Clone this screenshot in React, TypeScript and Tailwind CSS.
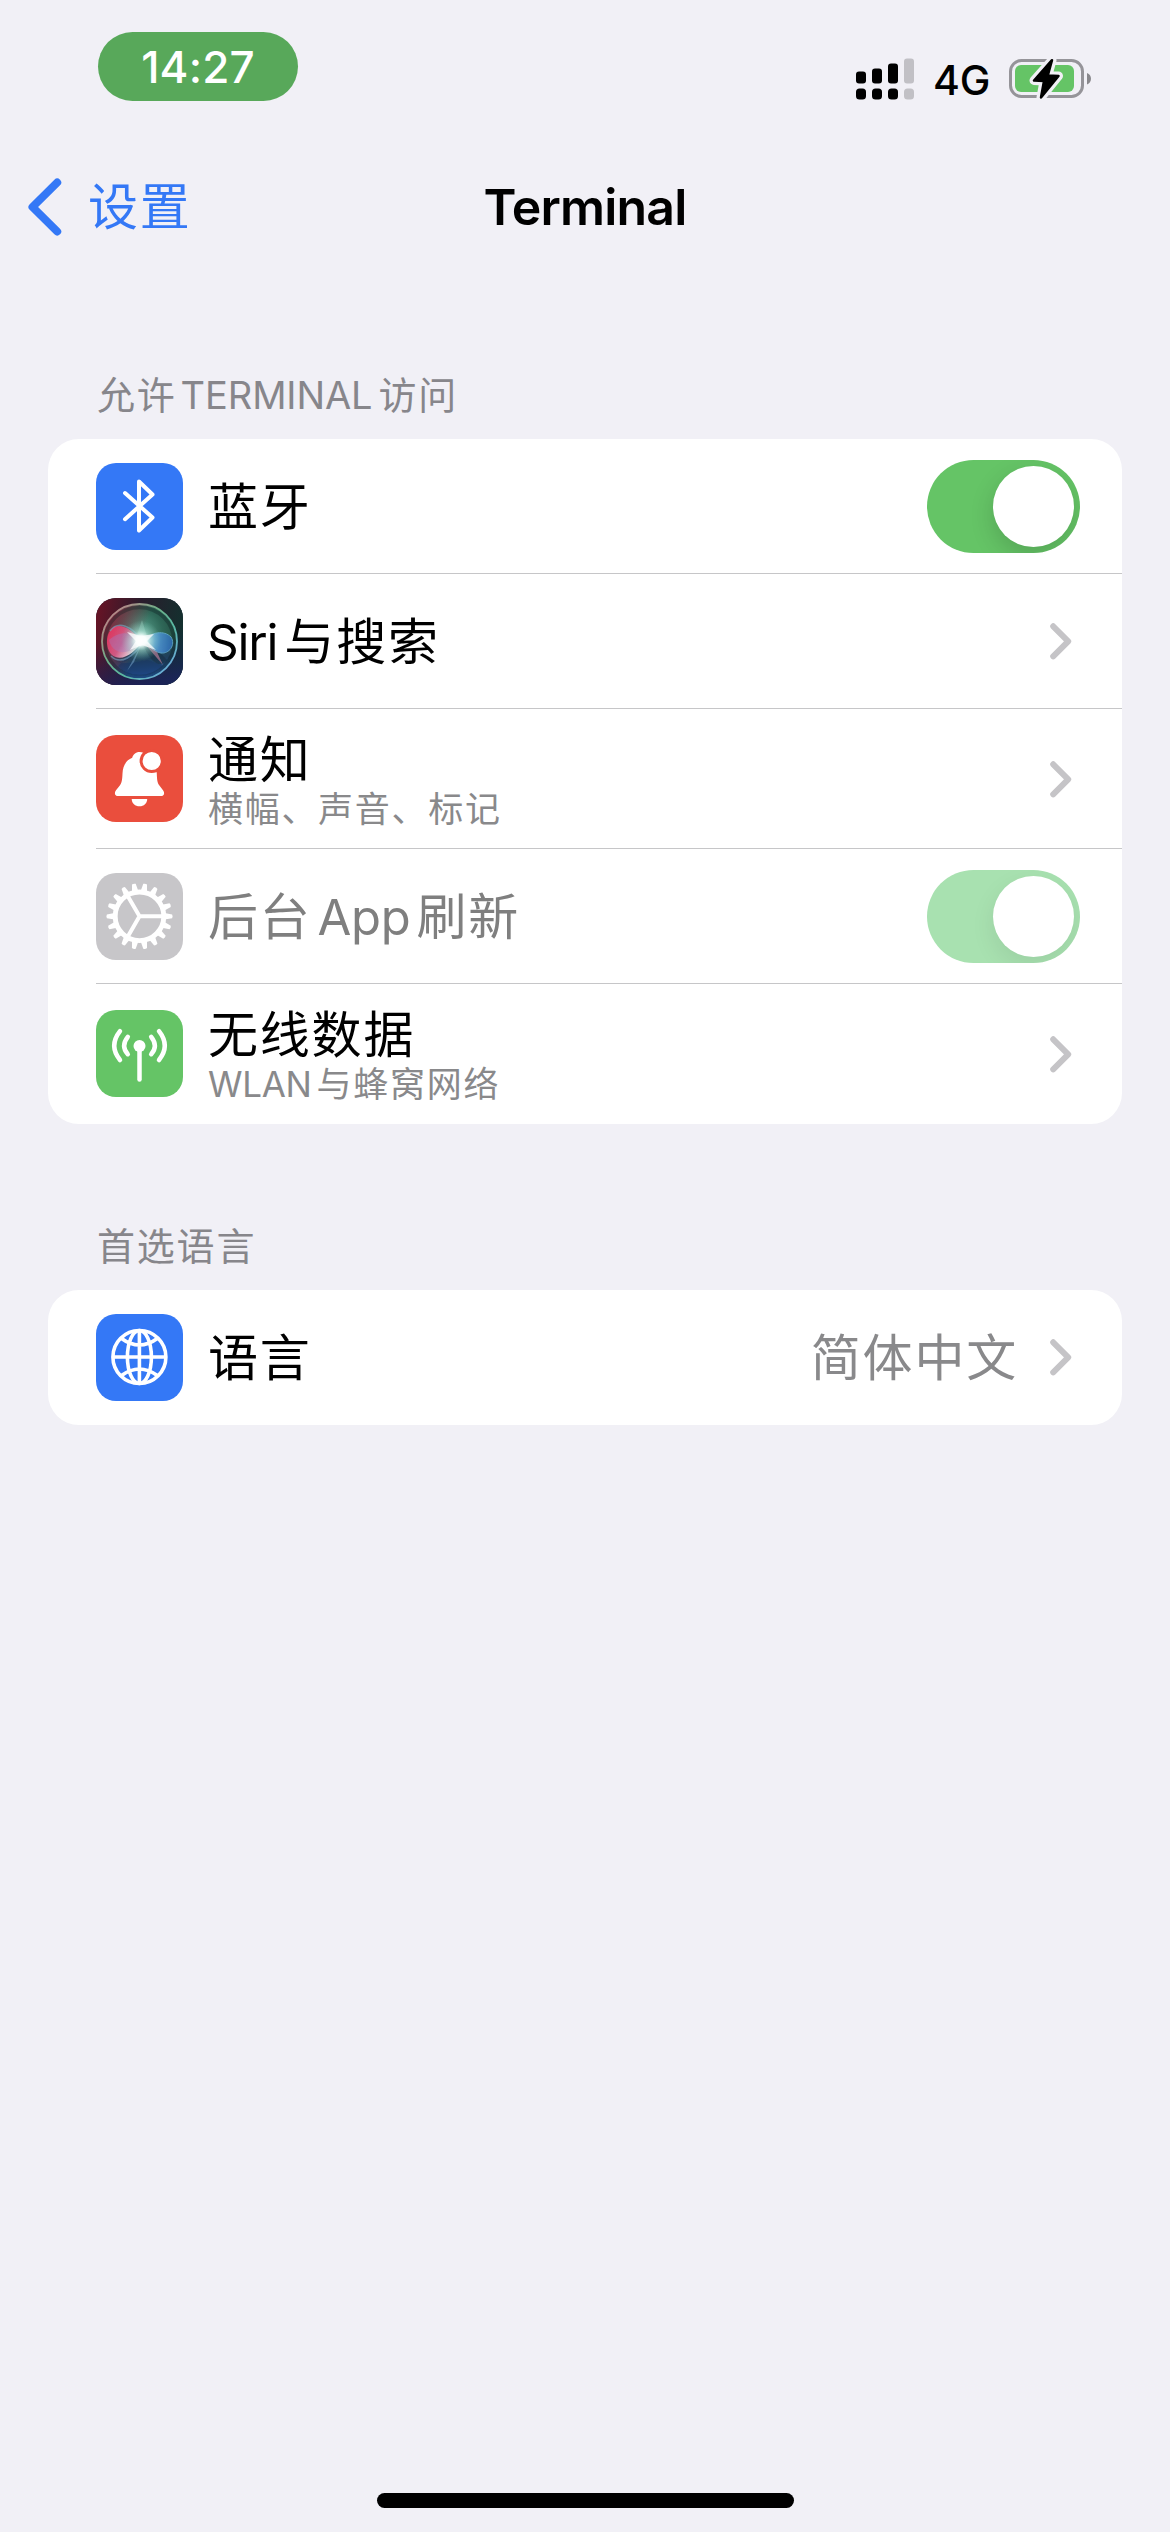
import type { ReactNode } from "react";

const GEAR_TEETH = Array.from({ length: 18 }, (_, i) => i * 20);

function StatusBar() {
  return (
    <header className="flex h-[140px] items-start justify-between pl-[98px] pr-[78px] pt-8">
      <div className="flex h-[69px] w-[200px] items-center justify-center rounded-full bg-[#58a85a]">
        <span className="text-[44px] font-medium leading-none tracking-[0.2px] text-white">14:27</span>
      </div>
      <div className="flex items-center pt-[24px]">
        <svg width="58" height="42" viewBox="0 0 58 42" className="mr-[19px]">
          <g fill="#000">
            <rect x="0" y="13.5" width="10" height="12" rx="3" />
            <rect x="16" y="10.5" width="10" height="15" rx="3" />
            <rect x="32" y="5.5" width="10" height="20" rx="3" />
            <rect x="0" y="30.5" width="10" height="11" rx="3.5" />
            <rect x="16" y="30.5" width="10" height="11" rx="3.5" />
            <rect x="32" y="30.5" width="10" height="11" rx="3.5" />
          </g>
          <g fill="#c1c0c5">
            <rect x="48" y="0.5" width="10" height="25" rx="3" />
            <rect x="48" y="30.5" width="10" height="11" rx="3.5" />
          </g>
        </svg>
        <span className="mr-[20px] w-[56px] whitespace-nowrap pt-[4px] text-[41px] font-medium leading-none tracking-[-0.2px] text-black">
          4G
        </span>
        <svg width="83" height="42" viewBox="0 0 83 42">
          <rect x="1.5" y="2.5" width="72" height="36" rx="11" fill="none" stroke="#959499" strokeWidth="3" />
          <path d="M78 15c2.6 1 4 3.2 4 5.700s-1.400 4.700-4 5.700z" fill="#89888c" />
          <rect x="6" y="7" width="59" height="27" rx="6" fill="#65c466" />
          <path
            d="M43 2.200 25 22.500 35 23 32 39.500 49.500 18 38.800 17.500Z"
            fill="#000"
            stroke="#f1f0f6"
            strokeWidth="9"
            strokeLinejoin="round"
          />
          <path
            d="M43 2.200 25 22.500 35 23 32 39.500 49.500 18 38.800 17.500Z"
            fill="#000"
            stroke="#000"
            strokeWidth="2.5"
            strokeLinejoin="round"
          />
        </svg>
      </div>
    </header>
  );
}

function NavBar() {
  return (
    <nav className="grid h-[133px] grid-cols-3 items-center">
      <div className="flex items-center pl-7 text-[#3478f6]">
        <svg width="34" height="58" viewBox="0 0 34 58" className="mr-[26px]" fill="none">
          <path d="M29.200 4.500 4.500 29 29.200 53.500" stroke="currentColor" strokeWidth="8" strokeLinecap="round" strokeLinejoin="round" />
        </svg>
        <span className="pt-px text-[50px] leading-none tracking-[1.8px]">设置</span>
      </div>
      <h1 className="text-center text-[50px] font-semibold leading-none tracking-[-0.8px] text-black">Terminal</h1>
    </nav>
  );
}

function IconTile({ className, children }: { className: string; children: ReactNode }) {
  return (
    <div className={`size-[87px] shrink-0 overflow-hidden rounded-[20px] ${className}`}>
      <svg width="87" height="87" viewBox="0 0 87 87" fill="none">
        {children}
      </svg>
    </div>
  );
}

function BluetoothIcon() {
  return (
    <IconTile className="bg-[#3478f6]">
      <path
        d="M29 30 56.500 54.500 43 67.500V18.500L56.500 31.500 29 56.200"
        stroke="#fff"
        strokeWidth="4"
        strokeLinecap="round"
        strokeLinejoin="round"
      />
    </IconTile>
  );
}

function SiriIcon() {
  return (
    <IconTile className="bg-[#1c2a3c]">
      <defs>
        <linearGradient id="siriBack" x1="0" y1="0.3" x2="1" y2="0.5">
          <stop offset="0" stopColor="#651426" />
          <stop offset="0.45" stopColor="#2a1c2c" />
          <stop offset="1" stopColor="#12322f" />
        </linearGradient>
        <linearGradient id="siriLow" x1="0.3" y1="0" x2="0.5" y2="1">
          <stop offset="0.45" stopColor="#15224f" stopOpacity="0" />
          <stop offset="1" stopColor="#1c2260" stopOpacity="0.8" />
        </linearGradient>
        <radialGradient id="siriOrb" cx="0.5" cy="0.38" r="0.62">
          <stop offset="0" stopColor="#5ea692" />
          <stop offset="0.5" stopColor="#2f6858" />
          <stop offset="1" stopColor="#1c4038" />
        </radialGradient>
        <linearGradient id="siriOrbLow" x1="0.4" y1="0" x2="0.5" y2="1">
          <stop offset="0.5" stopColor="#1c3c6c" stopOpacity="0" />
          <stop offset="0.75" stopColor="#1f3c62" stopOpacity="0.8" />
          <stop offset="1" stopColor="#2862b8" />
        </linearGradient>
        <linearGradient id="siriOrbLeft" x1="0" y1="0.3" x2="0.5" y2="0.5">
          <stop offset="0" stopColor="#8c2840" />
          <stop offset="1" stopColor="#8c2840" stopOpacity="0" />
        </linearGradient>
        <linearGradient id="siriRing" x1="0" y1="0.1" x2="0.9" y2="1">
          <stop offset="0" stopColor="#cc7c88" />
          <stop offset="0.4" stopColor="#6cb088" />
          <stop offset="0.65" stopColor="#58b8a4" />
          <stop offset="1" stopColor="#70a8e8" />
        </linearGradient>
        <linearGradient id="siriPink" x1="0" y1="0" x2="1" y2="0.5">
          <stop offset="0" stopColor="#ea2c56" />
          <stop offset="0.55" stopColor="#d85c88" />
          <stop offset="1" stopColor="#fff" />
        </linearGradient>
        <linearGradient id="siriBlue" x1="0" y1="0" x2="1" y2="0">
          <stop offset="0" stopColor="#fff" />
          <stop offset="0.4" stopColor="#5ca4e4" />
          <stop offset="1" stopColor="#2c6cbc" />
        </linearGradient>
        <radialGradient id="siriGlow">
          <stop offset="0" stopColor="#fff" />
          <stop offset="0.25" stopColor="#f4fffc" stopOpacity="0.95" />
          <stop offset="0.5" stopColor="#b4e8dc" stopOpacity="0.5" />
          <stop offset="1" stopColor="#7cc8b8" stopOpacity="0" />
        </radialGradient>
        <filter id="siriSoft" x="-20%" y="-20%" width="140%" height="140%">
          <feGaussianBlur stdDeviation="0.7" />
        </filter>
      </defs>
      <rect width="87" height="87" fill="url(#siriBack)" />
      <rect width="87" height="87" fill="url(#siriLow)" />
      <circle cx="43.5" cy="43.5" r="37" fill="url(#siriOrb)" />
      <circle cx="43.5" cy="43.5" r="37" fill="url(#siriOrbLow)" />
      <circle cx="43.5" cy="43.5" r="37" fill="url(#siriOrbLeft)" />
      <circle cx="43.5" cy="44" r="34.5" stroke="#0c1c20" strokeWidth="3.5" opacity="0.35" />
      <g filter="url(#siriSoft)">
        <path d="M46 44C56 48 68 58 71 62 64 72 54 64 46 44Z" fill="#122c3c" opacity="0.5" />
        <path d="M45 45C37 62 28 66 20 63 32 68 44 62 52 62 60 64 66 68 67 68 54 82 32 80 22 68Z" fill="#183460" opacity="0.5" />
        <path d="M46 43C37 33 27 25 18 29 9 34 9 51 16 57 26 65 39 54 46 44Z" fill="url(#siriPink)" opacity="0.92" />
        <path d="M46 42C34 32 22 34 13 42 16 56 32 60 46 43Z" fill="#a07cc0" opacity="0.4" />
        <path d="M14 33C22 22 36 28 46 43M15 58C25 68 38 58 47 44" stroke="#78a8c8" strokeWidth="1.5" opacity="0.6" />
        <path
          d="M47 42C56 34 68 32 75 39 80 47 73 56 65 55 57 54 51 46 47 42Z"
          fill="url(#siriBlue)"
          opacity="0.8"
          stroke="#68b4dc"
          strokeWidth="1"
        />
        <path d="M48 45 67 67 61 54Z" fill="#e08cac" opacity="0.55" />
        <path d="M46 22 40 40 52 42Z" fill="#b0e0d0" opacity="0.3" />
        <path d="M46 45 31 73 38 64Z" fill="#88b8e0" opacity="0.45" />
      </g>
      <circle cx="45" cy="42.5" r="20" fill="url(#siriGlow)" />
      <path d="M31 34 45 38 58 36 51 43 60 52 46 47 34 52 40 43Z" fill="#fff" opacity="0.75" filter="url(#siriSoft)" />
      <circle cx="43.5" cy="43.500" r="37.500" stroke="url(#siriRing)" strokeWidth="1.800" />
    </IconTile>
  );
}

function BellIcon() {
  return (
    <IconTile className="bg-[#ea4e3d]">
      <path
        d="M43.500 17C39.600 17 37.200 19.500 36.200 22.800 29.500 25.500 26.800 31.500 26.500 38.500 26.200 45 25.800 48 23.800 50.500L20 55.200C17.800 58.200 19 61 22.200 61H64.800C68 61 69.200 58.200 67 55.200L63.400 50.500C61.400 48 61 45 60.800 38.500 60 28 52 17 43.500 17Z"
        fill="#fff"
      />
      <path d="M35.700 64H51.200C51.200 68.500 47.800 71.300 43.500 71.300S35.700 68.500 35.700 64Z" fill="#fff" />
      <circle cx="55.700" cy="26" r="10.600" fill="#fff" stroke="#ea4e3d" strokeWidth="3" />
    </IconTile>
  );
}

function GearIcon() {
  return (
    <IconTile className="bg-[#c7c6c9]">
      <g transform="translate(43.500 43.300)">
        {GEAR_TEETH.map((angle) => (
          <path key={angle} d="M25 -3.200 32.600 -1.900Q33.600 0 32.600 1.900L25 3.200Z" fill="#fff" transform={`rotate(${angle})`} />
        ))}
        <circle r="24.300" stroke="#fff" strokeWidth="4.900" />
        <path d="M0 0H23M0 0 -11.500 -19.900M0 0 -11.500 19.900" stroke="#fff" strokeWidth="4" strokeLinejoin="round" />
      </g>
    </IconTile>
  );
}

function AntennaIcon() {
  return (
    <IconTile className="bg-[#65c466]">
      <circle cx="43.500" cy="36" r="6" fill="#fff" />
      <g stroke="#fff" strokeWidth="4.500" strokeLinecap="round">
        <path d="M43.500 38V69.600" />
        <path d="M31.800 26.800Q24.500 36 31.800 44.200M55.200 26.800Q62.500 36 55.200 44.200" />
        <path d="M24 21.200Q12.500 35.800 24 50M63 21.200Q74.500 35.800 63 50" />
      </g>
    </IconTile>
  );
}

function GlobeIcon() {
  return (
    <IconTile className="bg-[#3478f6]">
      <g stroke="#fff" strokeWidth="3.600">
        <circle cx="43.400" cy="43" r="26.500" />
        <ellipse cx="43.400" cy="43" rx="12" ry="26.500" />
        <path d="M43.400 16.500V69.500M17 43H70M25.500 24.500Q43.400 37.500 61.300 24.500M25.500 61.500Q43.400 48.500 61.300 61.500" />
      </g>
    </IconTile>
  );
}

function Chevron() {
  return (
    <svg width="22" height="37" viewBox="0 0 22 37" fill="none" className="mr-[8px] shrink-0">
      <path d="M3.200 3.300 18.200 18.300 3.200 33.300" stroke="#c5c4c7" strokeWidth="6" strokeLinecap="round" strokeLinejoin="round" />
    </svg>
  );
}

function Toggle({ disabled = false }: { disabled?: boolean }) {
  return (
    <div
      className={`flex h-[93px] w-[153px] shrink-0 items-center justify-end overflow-hidden rounded-full p-1.5 ${
        disabled ? "bg-[#a8e1b0]" : "bg-[#65c466]"
      }`}
    >
      <div
        className={`size-[81px] rounded-full bg-white ${
          disabled ? "shadow-[0_9px_24px_rgba(0,0,0,0.08)]" : "shadow-[0_9px_24px_rgba(0,0,0,0.16)]"
        }`}
      />
    </div>
  );
}

function SectionTitle({ children }: { children: ReactNode }) {
  return (
    <div className="flex h-[166px] items-end pb-6 pl-[97px]">
      <h2 className="whitespace-nowrap text-[38px] leading-[39px] tracking-[1.8px] text-[#87868b]">{children}</h2>
    </div>
  );
}

interface RowProps {
  icon: ReactNode;
  title: ReactNode;
  subtitle?: ReactNode;
  accessory: ReactNode;
  muted?: boolean;
  last?: boolean;
}

function Row({ icon, title, subtitle, accessory, muted = false, last = false }: RowProps) {
  return (
    <li className={`relative flex items-center pl-12 pr-[42px] ${subtitle ? "h-[140px]" : "h-[135px]"}`}>
      <div className={subtitle ? "pb-px" : ""}>{icon}</div>
      <div className={`ml-[25px] flex flex-1 flex-col gap-[7px] whitespace-nowrap leading-none ${subtitle ? "pt-[3px]" : "pt-px"}`}>
        <div className={`text-[50px] leading-none tracking-[1.8px] ${muted ? "text-[#7f7f7f]" : "text-black"}`}>{title}</div>
        {subtitle && <div className="text-[35px] leading-none tracking-[1.7px] text-[#89898b]">{subtitle}</div>}
      </div>
      {accessory}
      {!last && <div className="absolute bottom-0 left-12 right-0 h-px bg-[#c6c6c8]" />}
    </li>
  );
}

export default function App() {
  return (
    <div className="flex h-[2532px] w-[1170px] flex-col bg-[#f1f0f6] font-['Inter','Noto_Sans_CJK_SC',sans-serif]">
      <StatusBar />
      <NavBar />
      <main className="flex-1">
        <SectionTitle>
          允许<span className="ml-[4px] mr-[6px] tracking-[-0.1px]">TERMINAL</span>访问
        </SectionTitle>
        <ul className="mx-12 overflow-hidden rounded-[31px] bg-white">
          <Row icon={<BluetoothIcon />} title="蓝牙" accessory={<Toggle />} />
          <Row
            icon={<SiriIcon />}
            title={
              <>
                <span className="-ml-px mr-[7px] text-[49.5px] tracking-[-1.2px]">Siri</span>与搜索
              </>
            }
            accessory={<Chevron />}
          />
          <Row icon={<BellIcon />} title="通知" subtitle="横幅、声音、标记" accessory={<Chevron />} />
          <Row
            icon={<GearIcon />}
            title={
              <>
                后台<span className="ml-[6px] mr-[6px] text-[49px] tracking-[-0.3px]">App</span>刷新
              </>
            }
            accessory={<Toggle disabled />}
            muted
          />
          <Row
            icon={<AntennaIcon />}
            title="无线数据"
            subtitle={
              <>
                <span className="mr-[5px] tracking-[-0.3px]">WLAN</span>与蜂窝网络
              </>
            }
            accessory={<Chevron />}
            last
          />
        </ul>
        <SectionTitle>首选语言</SectionTitle>
        <ul className="mx-12 overflow-hidden rounded-[31px] bg-white">
          <Row
            icon={<GlobeIcon />}
            title="语言"
            accessory={
              <div className="flex items-center">
                <span className="mr-[32px] pt-px text-[50px] leading-none tracking-[1.8px] text-[#89898b]">简体中文</span>
                <Chevron />
              </div>
            }
            last
          />
        </ul>
      </main>
      <div className="mb-6 ml-[377px] h-[15px] w-[417px] rounded-full bg-black" />
    </div>
  );
}
